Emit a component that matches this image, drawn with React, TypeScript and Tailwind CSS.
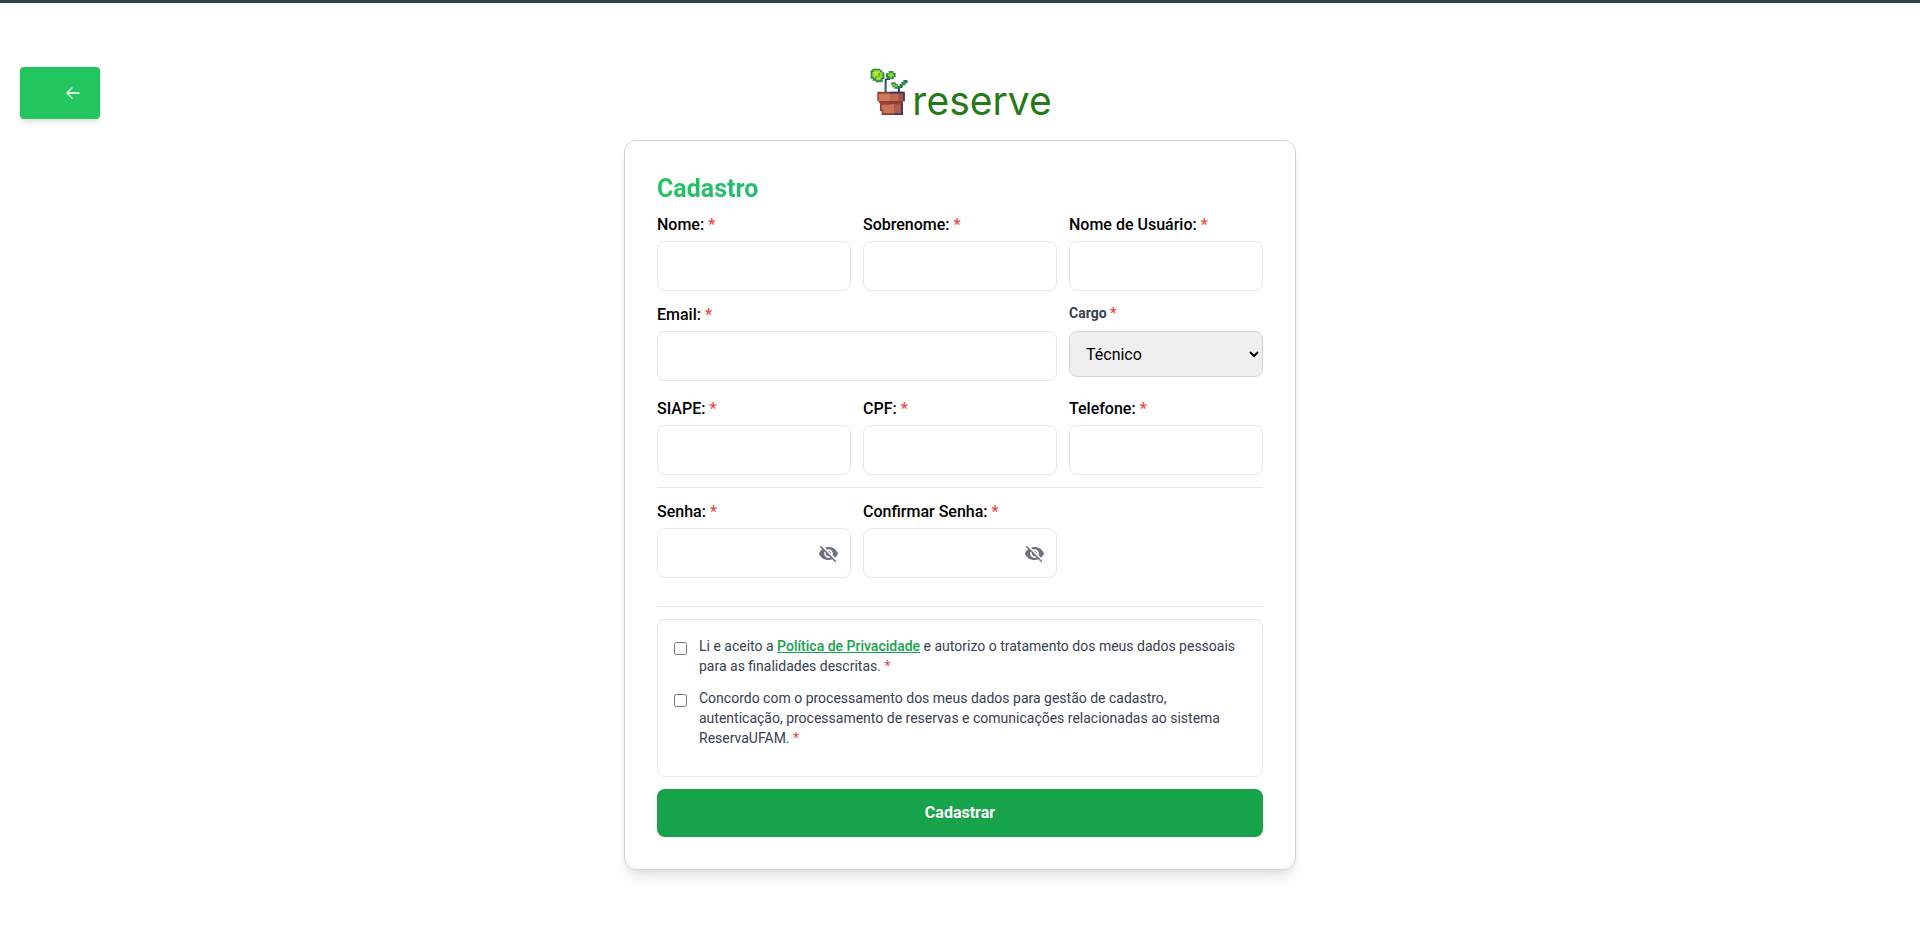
import { useState } from "react";
import type { ReactNode } from "react";
import { MdVisibility, MdVisibilityOff } from "react-icons/md";

const inputClass =
  "h-[50px] w-full rounded-lg border border-[#e5e7eb] bg-white px-4 text-base text-black outline-none focus:border-[#22c55e]";

function Required() {
  return <span className="text-[#ef4444]">*</span>;
}

function Field({ id, label, type = "text", className = "" }: { id: string; label: string; type?: string; className?: string }) {
  return (
    <div className={className}>
      <label htmlFor={id} className="mb-1 block text-base font-medium">
        {label} <Required />
      </label>
      <input id={id} name={id} type={type} className={inputClass} />
    </div>
  );
}

function PasswordField({ id, label }: { id: string; label: string }) {
  const [visible, setVisible] = useState(false);
  return (
    <div>
      <label htmlFor={id} className="mb-1 block text-base font-medium">
        {label} <Required />
      </label>
      <div className="relative">
        <input id={id} name={id} type={visible ? "text" : "password"} className={inputClass} />
        <button
          type="button"
          aria-label={visible ? "Ocultar senha" : "Mostrar senha"}
          onClick={() => setVisible(!visible)}
          className="absolute inset-y-0 right-3 flex items-center text-[#6b7280]"
        >
          {visible ? <MdVisibility size={21} /> : <MdVisibilityOff size={21} />}
        </button>
      </div>
    </div>
  );
}

function Consent({ id, children }: { id: string; children: ReactNode }) {
  return (
    <div className="flex items-start gap-3">
      <input id={id} name={id} type="checkbox" className="mt-1.5 size-[13px] shrink-0" />
      <label htmlFor={id} className="text-sm text-[#374151]">
        {children} <Required />
      </label>
    </div>
  );
}

function Plant() {
  return (
    <svg viewBox="24 21 120 144" className="h-12 w-10" aria-hidden="true">
      {/* stems */}
      <path d="M74 56h6v42h-6zM80 54h10v6H80zM114 84h6v14h-6zM119 78h8v6h-8z" fill="#274a72" />
      <path d="M74 74h3v20h-3z" fill="#2f9a58" />
      {/* large leaf */}
      <path d="M37 26h24v5h6v6h6v20h-5v10H47v-5h-9v-6h-6V31h5z" fill="#2a8b45" />
      <path d="M41 31h19v6h7v17h-5v7H49v-6h-8v-5h-4V36h4z" fill="#a8dc2c" />
      <path d="M55 39h6v11h-6zM45 48h8v5h-8z" fill="#5cb52f" />
      <path d="M43 35h9v8h-9z" fill="#c3e83a" />
      {/* small leaf */}
      <path d="M86 33h14v5h7v13h-6v7H85v-5h-7V40h8z" fill="#2a8b45" />
      <path d="M88 38h10v5h4v6h-6v4H88v-5h-4v-6h4z" fill="#90d030" />
      {/* right sprout */}
      <path d="M94 67h13v5h6v5h6v-5h5v-6h6v-6h12v10h-6v6h-7v5h-8v5h-18v-4h-6v-7h-3z" fill="#2c8148" />
      <path d="M97 71h8v5h7v6h-9v-4h-6z" fill="#79c832" />
      <path d="M125 71h6v-5h7v5h-6v5h-7z" fill="#36a052" />
      <path d="M136 61h6v8h-5z" fill="#33647a" />
      {/* pot */}
      <path d="M52 95h82v29h-5v6H57v-6h-5z" fill="#8e3f35" />
      <path d="M60 129h67v36H65v-12h-5z" fill="#8e3f35" />
      <path d="M91 95h43v6H91zM130 96h4v28h-4zM124 130h5v35h-5zM103 160h22v5h-22z" fill="#2b3a70" />
      <path d="M56 101h36v22H56z" fill="#cf785a" />
      <path d="M92 101h24v22H92z" fill="#c16a50" />
      <path d="M116 101h13v22h-13z" fill="#a9553f" />
      <path d="M65 133h38v27H70v-11h-5z" fill="#cb7356" />
      <path d="M103 133h20v27h-20z" fill="#b35c47" />
      <path d="M65 130h24v5H65z" fill="#a34c3c" />
    </svg>
  );
}

export default function App() {
  return (
    <div className="min-h-screen border-t-3 border-[#2c4444] bg-white font-[Roboto,'Noto_Sans',sans-serif] text-black">
      <div className="grid grid-cols-[1fr_minmax(0,672px)_1fr] pt-16 pb-16">
        <div className="pl-5">
          <button
            type="button"
            aria-label="Voltar"
            className="flex h-[52px] w-20 items-center justify-end rounded bg-[#22c55e] pr-5 text-white shadow-md"
          >
            <svg viewBox="2 3 20 18" className="h-3 w-3.5" fill="none" stroke="currentColor" strokeWidth="2" strokeLinecap="round" strokeLinejoin="round">
              <path d="M10.5 19.5 3 12l7.5-7.5M3 12h18" />
            </svg>
          </button>
        </div>

        <main>
          <div className="mb-5 flex items-baseline justify-center gap-1">
            <Plant />
            <span className="font-[Inter,sans-serif] text-[39px] leading-none text-[#257a17]">reserve</span>
          </div>

          <div className="rounded-xl border border-[#d1d5db] bg-white p-8 shadow-lg">
            <h1 className="mb-2 bg-linear-to-r/srgb from-[#22c55e] to-[#3b82f6] bg-clip-text text-[25px] leading-8 font-bold text-transparent">
              Cadastro
            </h1>
            <form onSubmit={(e) => e.preventDefault()}>
              <div className="mb-4 grid grid-cols-3 gap-3">
                <Field id="nome" label="Nome:" />
                <Field id="sobrenome" label="Sobrenome:" />
                <Field id="usuario" label="Nome de Usuário:" />
                <Field id="email" label="Email:" type="email" className="col-span-2" />
                <div>
                  <label htmlFor="cargo" className="mb-2 block text-sm font-bold text-[#374151]">
                    Cargo <Required />
                  </label>
                  <select
                    id="cargo"
                    name="cargo"
                    defaultValue="tecnico"
                    className="h-[46px] w-full rounded-lg border border-[#d1d5db] bg-[#efefef] px-3 text-base text-black"
                  >
                    <option value="tecnico">Técnico</option>
                    <option value="professor">Professor</option>
                  </select>
                </div>
              </div>

              <div className="grid grid-cols-3 gap-3">
                <Field id="siape" label="SIAPE:" />
                <Field id="cpf" label="CPF:" />
                <Field id="telefone" label="Telefone:" type="tel" />
              </div>

              <hr className="my-3 border-[#e5e7eb]" />

              <div className="mb-7 grid grid-cols-3 gap-3">
                <PasswordField id="senha" label="Senha:" />
                <PasswordField id="confirmar" label="Confirmar Senha:" />
              </div>

              <hr className="my-3 border-[#e5e7eb]" />

              <div className="space-y-3 rounded-lg border border-[#e5e7eb] px-4 pt-4 pb-7">
                <Consent id="privacidade">
                  Li e aceito a{" "}
                  <a href="#politica" className="font-medium text-[#16a34a] underline">
                    Política de Privacidade
                  </a>{" "}
                  e autorizo o tratamento dos meus dados pessoais para as finalidades descritas.
                </Consent>
                <Consent id="processamento">
                  Concordo com o processamento dos meus dados para gestão de cadastro, autenticação, processamento de
                  reservas e comunicações relacionadas ao sistema ReservaUFAM.
                </Consent>
              </div>

              <button type="submit" className="mt-3 h-12 w-full rounded-lg bg-[#16a34a] text-base font-bold text-white">
                Cadastrar
              </button>
            </form>
          </div>
        </main>
      </div>
    </div>
  );
}
